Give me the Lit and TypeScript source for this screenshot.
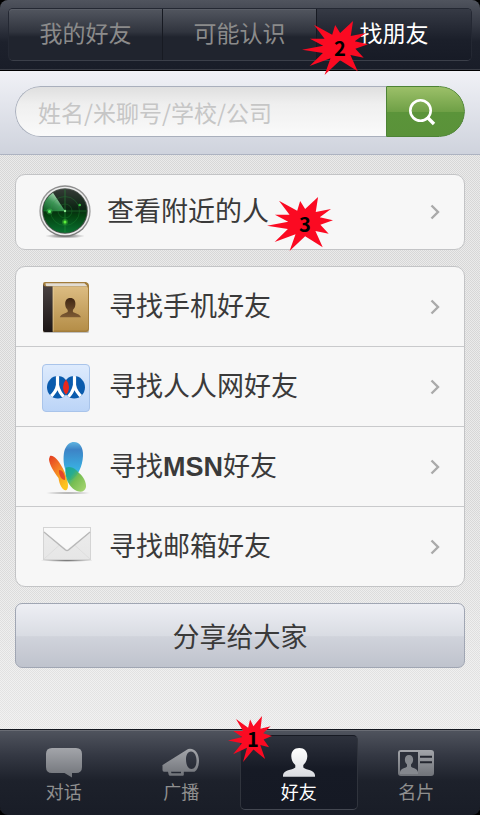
import { LitElement, html, css, svg, nothing } from "lit";
import { customElement, property, state } from "lit/decorators.js";
import { classMap } from "lit/directives/class-map.js";

const radar = svg`<svg class="icon" viewBox="0 0 54 54" aria-hidden="true">
  <defs>
    <linearGradient id="ring" x1="0" y1="0" x2="0" y2="1"><stop offset="0" stop-color="#8c8c8c"/><stop offset=".5" stop-color="#a5a5a5"/><stop offset="1" stop-color="#767676"/></linearGradient>
    <linearGradient id="scr" x1="0" y1="0" x2="0" y2="1"><stop offset="0" stop-color="#343a36"/><stop offset=".45" stop-color="#0b2412"/><stop offset=".6" stop-color="#03400f"/><stop offset="1" stop-color="#0a7030"/></linearGradient>
    <linearGradient id="beam" x1="0" y1="1" x2=".8" y2="0"><stop offset="0" stop-color="#0b5a20"/><stop offset=".5" stop-color="#3f9458"/><stop offset="1" stop-color="#d8f5dc"/></linearGradient>
    <radialGradient id="soft"><stop offset="0" stop-color="#000" stop-opacity=".6"/><stop offset="1" stop-color="#000" stop-opacity="0"/></radialGradient>
  </defs>
  <ellipse cx="27" cy="51" rx="20" ry="2.500" fill="url(#soft)"/>
  <circle cx="27" cy="26" r="25.700" fill="url(#ring)"/>
  <circle cx="27" cy="26" r="24.300" fill="#ececec"/>
  <circle cx="27" cy="26" r="22.800" fill="#4a524c"/>
  <circle cx="27" cy="26" r="21.800" fill="url(#scr)"/>
  <path d="M27 26L5.200 26A21.800 21.800 0 0 1 15 7.800Z" fill="url(#beam)"/>
  <g fill="none" stroke="#27a53d" stroke-width=".7" opacity=".4"><circle cx="27" cy="26" r="7"/><circle cx="27" cy="26" r="14.500"/><path d="M27 4.500V47.500M5.500 26H48.500" stroke-width="1.200"/></g>
  <circle cx="11.500" cy="26.500" r="3" fill="#5cf064" opacity=".3"/><circle cx="27" cy="37" r="3" fill="#5cf03c" opacity=".3"/>
  <circle cx="11.500" cy="26.500" r="1.500" fill="#5cf064"/><circle cx="27" cy="37" r="1.500" fill="#5cf03c"/><circle cx="41.700" cy="20" r="1.300" fill="#3cc044"/><circle cx="27" cy="26" r="1.200" fill="#8ce690"/>
</svg>`;

const book = svg`<svg class="icon" viewBox="0 0 54 54" aria-hidden="true">
  <defs>
    <linearGradient id="cover" x1="0" y1="0" x2="0" y2="1"><stop offset="0" stop-color="#dcbc82"/><stop offset="1" stop-color="#b58e48"/></linearGradient>
    <linearGradient id="spine" x1="0" y1="0" x2="0" y2="1"><stop offset="0" stop-color="#4c4444"/><stop offset="1" stop-color="#1c1616"/></linearGradient>
    <linearGradient id="bust" x1="0" y1="0" x2="0" y2="1"><stop offset="0" stop-color="#3f2613"/><stop offset="1" stop-color="#7d5a33"/></linearGradient>
  </defs>
  <rect x="5" y="50" width="46" height="3" rx="1.500" fill="#000" opacity=".22"/>
  <path d="M7 2H48Q51 3 51 6V49Q51 52 48 52H7Q5 52 5 50V4Q5 2 7 2Z" fill="#a27d3c"/>
  <path d="M14 6.500H49L50 8V48.500Q50 50.500 47.500 50.500H14Z" fill="url(#cover)"/>
  <path d="M7.500 3.300H46.500L49.500 6.300H9Q7.500 6.300 7.500 3.300Z" fill="#e2ddd4"/>
  <path d="M5 4Q5.500 6.500 8 6.500H14.700V52H7Q5 52 5 50Z" fill="url(#spine)"/>
  <path d="M15.200 7V51.500" stroke="#f0d9aa" stroke-width=".8" opacity=".7"/>
  <path d="M32.300 18C35.900 18 37.600 20.500 37.400 24.300C37.200 27.200 36.300 28.600 34.900 29.900V32C37.500 33.800 41.800 33.800 43 37.300H21.800C23 33.800 27.200 33.800 29.700 32V29.900C28.300 28.600 27.400 27.200 27.200 24.300C27 20.500 28.700 18 32.300 18Z" fill="url(#bust)"/>
</svg>`;

const renren = svg`<svg class="icon" viewBox="0 0 54 54" aria-hidden="true">
  <defs>
    <linearGradient id="tile" x1="0" y1="0" x2="0" y2="1"><stop offset="0" stop-color="#deebfd"/><stop offset="1" stop-color="#bbd4f7"/></linearGradient>
    <clipPath id="discs"><ellipse cx="19.800" cy="27.300" rx="10.800" ry="11.200"/><ellipse cx="36.200" cy="27.300" rx="10.800" ry="11.200"/></clipPath>
  </defs>
  <rect x="4.500" y="4.500" width="47" height="47" rx="3.500" fill="url(#tile)" stroke="#a9c4ea"/>
  <ellipse cx="19.800" cy="27.300" rx="10.800" ry="11.200" fill="#0a5bad"/>
  <ellipse cx="36.200" cy="27.300" rx="10.800" ry="11.200" fill="#0a5bad"/>
  <g fill="none" stroke="#fff" stroke-width="3.200" clip-path="url(#discs)"><path d="M19.500 15V25Q18.500 32 11 38M19.500 25Q21 33 28 39"/><path d="M36.500 15V25Q37.500 32 45 38M36.500 25Q35 33 28 39"/></g>
  <path d="M28 19.500Q31 23 31 27Q31 31.500 28 34.500Q25 31.500 25 27Q25 23 28 19.500Z" fill="#e8291c"/>
</svg>`;

const msn = svg`<svg class="icon" viewBox="0 0 54 54" aria-hidden="true">
  <defs>
    <linearGradient id="blue" x1="0" y1="0" x2="0" y2="1"><stop offset="0" stop-color="#5fb4e0"/><stop offset=".2" stop-color="#3d83c6"/><stop offset=".75" stop-color="#39b3e4"/><stop offset="1" stop-color="#2fb7b0"/></linearGradient>
    <linearGradient id="green" x1="0" y1="0" x2="1" y2="1"><stop offset="0" stop-color="#12a596"/><stop offset=".3" stop-color="#27ab8c"/><stop offset=".5" stop-color="#6cb944"/><stop offset="1" stop-color="#a6d46a"/></linearGradient>
    <linearGradient id="fire" x1="0" y1="0" x2=".6" y2="1"><stop offset="0" stop-color="#e23a22"/><stop offset=".45" stop-color="#f47a24"/><stop offset=".75" stop-color="#f8a51e"/><stop offset="1" stop-color="#fcc41c"/></linearGradient>
    <radialGradient id="floor"><stop offset="0" stop-color="#000" stop-opacity=".4"/><stop offset="1" stop-color="#000" stop-opacity="0"/></radialGradient>
  </defs>
  <ellipse cx="30" cy="53" rx="24" ry="1.300" fill="url(#floor)"/>
  <path d="M12 16C14.500 15 18 17.500 21 22C24 26.500 26.500 31 28 36C30 41 31 49 28.500 50C25.500 51.500 21.500 46 20.500 38C16 32 11 24 11 19Z" fill="url(#fire)"/>
  <path d="M21 30C25 30 27.500 35 27 40C23.500 40 20.500 35 21 30Z" fill="#dc2a2f" opacity=".75"/>
  <path d="M36 2C42 2 45.500 8 45 16C44.500 26 40 36 33.500 40C30 41 28 36 27.500 30C25 24 25 14 27 9C29 4.500 32 2 36 2Z" fill="url(#blue)"/>
  <path d="M28 27.500C33 25.500 38 29 41 33C45 36 48.500 42 48 47C47 52 42 53 37 50C31 46.500 27 38 27.500 30Z" fill="url(#green)" opacity=".93"/>
</svg>`;

const mail = svg`<svg class="icon" viewBox="0 0 54 54" aria-hidden="true">
  <defs>
    <linearGradient id="paper" x1="0" y1="0" x2="0" y2="1"><stop offset="0" stop-color="#ececec"/><stop offset="1" stop-color="#e6e6e6"/></linearGradient>
    <radialGradient id="under"><stop offset="0" stop-color="#000" stop-opacity=".6"/><stop offset="1" stop-color="#000" stop-opacity="0"/></radialGradient>
  </defs>
  <ellipse cx="29" cy="40.200" rx="27" ry="1.800" fill="url(#under)"/>
  <rect x="5.500" y="7.500" width="47" height="32" fill="url(#paper)" stroke="#d4d4d4"/>
  <path d="M6 39L22 24.500M52 39L36 24.500" stroke="#dadada" stroke-width=".8"/>
  <path d="M6 12L27.500 30Q29 31 30.500 30L52 12" fill="none" stroke="#b8b8b8" stroke-width="1.500"/>
  <path d="M6 8H52V11L30 29Q29 29.800 28 29L6 11Z" fill="#f9f9f9"/>
</svg>`;

const chat = svg`<svg class="glyph" viewBox="0 0 38 32" aria-hidden="true"><path d="M7 2H31Q37 2 37 8V21Q37 27 31 27H27V31.500L19.500 27H7Q1 27 1 21V8Q1 2 7 2Z" fill="url(#grey)"/><defs><linearGradient id="grey" x1="0" y1="0" x2="0" y2="1"><stop offset="0" stop-color="#a3a5aa"/><stop offset="1" stop-color="#707379"/></linearGradient></defs></svg>`;

const horn = svg`<svg class="glyph" viewBox="0 0 38 32" aria-hidden="true"><defs><linearGradient id="grey2" x1="0" y1="0" x2="0" y2="1"><stop offset="0" stop-color="#a3a5aa"/><stop offset="1" stop-color="#707379"/></linearGradient></defs>
  <path fill-rule="evenodd" d="M.5 20Q0 19.500 1 18.700L24.500 4Q26 2.800 28 2.800C33.500 2.800 37 8.500 37 14.500C37 20 35.500 24 32.500 25.700H21.800V28.700Q21.800 29.700 20.800 29.700H8Q7 29.700 6.700 28.700L6 25.700H2Q.5 25.700 .5 24ZM29 5.500C25.500 5.500 24 9.500 24 13.500C24 18.500 26 23 29.500 23C33 23 34.500 19 34.500 14.500C34.500 10 32.500 5.500 29 5.500ZM9 25.700L9.500 27.300H19V25.700Z" fill="url(#grey2)"/></svg>`;

const person = svg`<svg class="glyph" viewBox="0 0 38 32" aria-hidden="true"><defs><linearGradient id="white" x1="0" y1="0" x2="0" y2="1"><stop offset="0" stop-color="#fff"/><stop offset="1" stop-color="#d9dbe0"/></linearGradient></defs>
  <path d="M19.300 2C24.700 2 27.500 5.500 27.300 10.500C27.100 14.500 25.500 17 23.300 19V21.500C27 24.500 34 23.500 35 29V30.700H3V29C4 23.500 11.500 24.500 15.300 21.500V19C13 17 11.500 14.500 11.300 10.500C11.100 5.500 13.900 2 19.300 2Z" fill="url(#white)"/></svg>`;

const idCard = svg`<svg class="glyph" viewBox="0 0 38 32" aria-hidden="true"><defs><linearGradient id="grey3" x1="0" y1="0" x2="0" y2="1"><stop offset="0" stop-color="#a3a5aa"/><stop offset="1" stop-color="#707379"/></linearGradient></defs>
  <rect x="1" y="4" width="36" height="26" rx="3" fill="url(#grey3)"/><rect x="3" y="6" width="18" height="20" fill="#2c303a"/>
  <path d="M12 9C14.800 9 16.300 11 16.100 14C16 16 15.200 17.400 14 18.400V20.500C16 22.500 20 22 21 26V28H3V26C4 22 8 22.500 10 20.500V18.400C8.800 17.400 8 16 7.900 14C7.700 11 9.200 9 12 9Z" fill="#85888e"/>
  <path d="M23 10.700H35M23 16.300H35" stroke="#23262f" stroke-width="2"/></svg>`;

@customElement("star-badge")
export class StarBadge extends LitElement {
  @property() label = "";

  static styles = css`
    :host {
      position: absolute;
      z-index: 2;
      display: block;
      width: 66px;
      height: 54px;
      pointer-events: none;
    }
    .burst {
      position: absolute;
      inset: 0;
      width: 100%;
      height: 100%;
    }
    .digit {
      position: relative;
      display: block;
      padding-left: 10px;
      text-align: center;
      font: bold 20px/54px "Noto Sans CJK SC", sans-serif;
      color: #000;
    }
    :host([narrow]) {
      width: 44px;
      height: 46px;
    }
    :host([narrow]) .digit {
      padding-left: 6px;
      line-height: 46px;
    }
  `;

  render() {
    return html`<svg class="burst" viewBox="82 96 199 162" preserveAspectRatio="none" aria-hidden="true">
        <path fill="#fb0a22" d="M118 107L173 137L182 108L197 132L236 96L229 141L275 132L241 157L281 166L243 179L268 206L228 198L250 247L197 214L150 258L168 208L105 231L145 192L82 182L146 170L106 149L150 149Z"/>
      </svg><span class="digit">${this.label}</span>`;
  }
}

interface Entry {
  icon: unknown;
  text: unknown;
  badge?: string;
}

@customElement("app-root")
export class AppRoot extends LitElement {
  @state() private tab = 2;
  @state() private section = 2;

  private tabs = ["我的好友", "可能认识", "找朋友"];

  private groups: Entry[][] = [
    [{ icon: radar, text: "查看附近的人", badge: "3" }],
    [
      { icon: book, text: "寻找手机好友" },
      { icon: renren, text: "寻找人人网好友" },
      { icon: msn, text: html`寻找<b>MSN</b>好友` },
      { icon: mail, text: "寻找邮箱好友" },
    ],
  ];

  private sections = [
    { icon: chat, text: "对话" },
    { icon: horn, text: "广播" },
    { icon: person, text: "好友", badge: "1" },
    { icon: idCard, text: "名片" },
  ];

  static styles = css`
    * {
      box-sizing: border-box;
    }
    :host {
      display: flex;
      flex-direction: column;
      min-height: 100vh;
      background: #000;
      font-family: "Liberation Sans", "Noto Sans CJK SC", sans-serif;
      color: #3a3a3a;
    }
    button,
    input {
      margin: 0;
      padding: 0;
      border: 0;
      background: none;
      font: inherit;
      color: inherit;
    }
    button {
      cursor: pointer;
    }

    .top {
      padding: 8px 8px 9px;
      border-bottom: 1px solid #000;
      border-radius: 8px 8px 0 0;
      background: linear-gradient(#50545e, #343843 35%, #1d212c 60%, #191d28);
      box-shadow: inset 0 -1px #3a3d46;
    }
    .tabs {
      display: grid;
      grid-template-columns: repeat(3, 1fr);
      border: 1px solid #242833;
      border-bottom-color: #3b3f49;
      border-radius: 5px;
    }
    .tab {
      position: relative;
      height: 51px;
      border-right: 1px solid #171a22;
      background: linear-gradient(#52565f, #30343e 45%, #20242e 55%, #20242e);
      box-shadow: inset 0 1px #5a5e67;
      font-size: 23px;
      line-height: 51px;
      color: #8b8b8b;
    }
    .tab:first-child {
      border-radius: 4px 0 0 4px;
    }
    .tab:last-child {
      border-right: 0;
      border-radius: 0 4px 4px 0;
    }
    .tab.on {
      background: linear-gradient(#363a45, #1b1f2a 60%, #171b26);
      box-shadow: none;
      color: #fff;
    }
    .tab star-badge {
      left: -15px;
      top: 12px;
    }

    .find {
      padding: 15px 15px 17px;
      border-bottom: 1px solid #adb3c1;
      background: linear-gradient(#f0f1f6, #cfd3dd);
    }
    .field {
      display: flex;
      height: 51px;
      border-radius: 26px;
      overflow: hidden;
    }
    .query {
      flex: 1;
      min-width: 0;
      padding-left: 22px;
      border: 1px solid #a9afbc;
      border-right: 0;
      border-radius: 26px 0 0 26px;
      background: linear-gradient(#dfdfdf, #efefef 35%, #fafafa);
      font-family: "Noto Sans CJK SC", sans-serif;
      font-size: 23px;
      outline: none;
    }
    .query::placeholder {
      color: #c6c6c6;
      opacity: 1;
    }
    .go {
      display: flex;
      align-items: center;
      justify-content: center;
      width: 79px;
      padding-right: 8px;
      border: 1px solid #4d8335;
      border-radius: 0 26px 26px 0;
      background: linear-gradient(#9cc069, #6fa046 50%, #5b943a 51%, #5a9239);
    }
    .lens {
      width: 28px;
      height: 28px;
    }

    .body {
      flex: 1;
      display: flex;
      flex-direction: column;
      gap: 16px;
      padding: 19px 15px 60px;
      background:
        linear-gradient(rgba(255, 255, 255, 0) 60%, rgba(255, 255, 255, 0.35)),
        repeating-conic-gradient(#d7d7d7 0 25%, #ebebeb 0 50%) 0 0 / 2px 2px;
    }
    .group {
      margin: 0;
      padding: 0;
      list-style: none;
      border: 1px solid #c3c4c6;
      border-radius: 10px;
      background: #f7f7f7;
    }
    .item + .item {
      border-top: 1px solid #c9cacc;
    }
    .row {
      display: flex;
      align-items: center;
      gap: 17px;
      width: 100%;
      height: 79px;
      padding: 0 24px 0 22px;
      font-size: 27px;
      line-height: 40px;
      text-align: left;
    }
    .item:only-child .row {
      gap: 15px;
      height: 74px;
    }
    .icon {
      flex: none;
      width: 54px;
      height: 54px;
    }
    .text {
      position: relative;
    }
    .text star-badge {
      left: 160px;
      top: 5px;
    }
    .chevron {
      width: 10px;
      height: 16px;
      margin-left: auto;
    }
    .share {
      height: 65px;
      border: 1px solid #a0a6b3;
      border-radius: 7px;
      background: linear-gradient(#eeeff4, #d9dce3 50%, #d0d3db 52%, #bfc3cd);
      font-size: 27px;
    }

    .dock {
      background: #000;
    }
    .bar {
      display: grid;
      grid-template-columns: repeat(4, 1fr);
      padding: 5px;
      border-top: 1px solid #14171f;
      border-radius: 0 0 8px 8px;
      background: linear-gradient(#50545e, #343843 30%, #1d212b 60%, #191d27);
      box-shadow: inset 0 1px #6a6d75;
    }
    .section {
      position: relative;
      display: flex;
      flex-direction: column;
      align-items: center;
      gap: 4px;
      height: 75px;
      padding-top: 10px;
      border: 1px solid transparent;
      border-radius: 5px;
      font-size: 18px;
      line-height: 22px;
      color: #8f8f8f;
    }
    .section.on {
      border-color: #171a23 #30343d #434751;
      background: linear-gradient(#2e323d, #161a25 45%, #151924);
      color: #fff;
    }
    .glyph {
      width: 38px;
      height: 32px;
    }
    .section star-badge {
      left: -13px;
      top: -20px;
    }
  `;

  render() {
    return html`
      <header class="top">
        <nav class="tabs">
          ${this.tabs.map(
            (name, i) => html`<button class=${classMap({ tab: true, on: i === this.tab })} @click=${() => (this.tab = i)}>
              ${name}${i === 2 ? html`<star-badge label="2"></star-badge>` : nothing}
            </button>`
          )}
        </nav>
      </header>
      <form class="find" @submit=${(e: Event) => e.preventDefault()}>
        <div class="field">
          <input class="query" type="text" aria-label="姓名/米聊号/学校/公司" placeholder="姓名/米聊号/学校/公司" />
          <button class="go" aria-label="搜索">
            <svg class="lens" viewBox="0 0 28 28" fill="none" stroke="#fff" aria-hidden="true">
              <circle cx="12.500" cy="12.500" r="10.200" stroke-width="2.600" /><path d="M19 19L26 26" stroke-width="3.400" />
            </svg>
          </button>
        </div>
      </form>
      <main class="body">
        ${this.groups.map(
          (group) => html`<ul class="group">
            ${group.map(
              (entry) => html`<li class="item">
                <button class="row">
                  ${entry.icon}
                  <span class="text">${entry.text}${entry.badge ? html`<star-badge label=${entry.badge}></star-badge>` : nothing}</span>
                  <svg class="chevron" viewBox="0 0 10 16" fill="none" stroke="#aaa" stroke-width="2.400" aria-hidden="true">
                    <path d="M1.500 1.500L8 8L1.500 14.500" />
                  </svg>
                </button>
              </li>`
            )}
          </ul>`
        )}
        <button class="share">分享给大家</button>
      </main>
      <footer class="dock">
        <nav class="bar">
          ${this.sections.map(
            (s, i) => html`<button class=${classMap({ section: true, on: i === this.section })} @click=${() => (this.section = i)}>
              ${s.icon}<span>${s.text}</span>${s.badge ? html`<star-badge narrow label=${s.badge}></star-badge>` : nothing}
            </button>`
          )}
        </nav>
      </footer>
    `;
  }
}
